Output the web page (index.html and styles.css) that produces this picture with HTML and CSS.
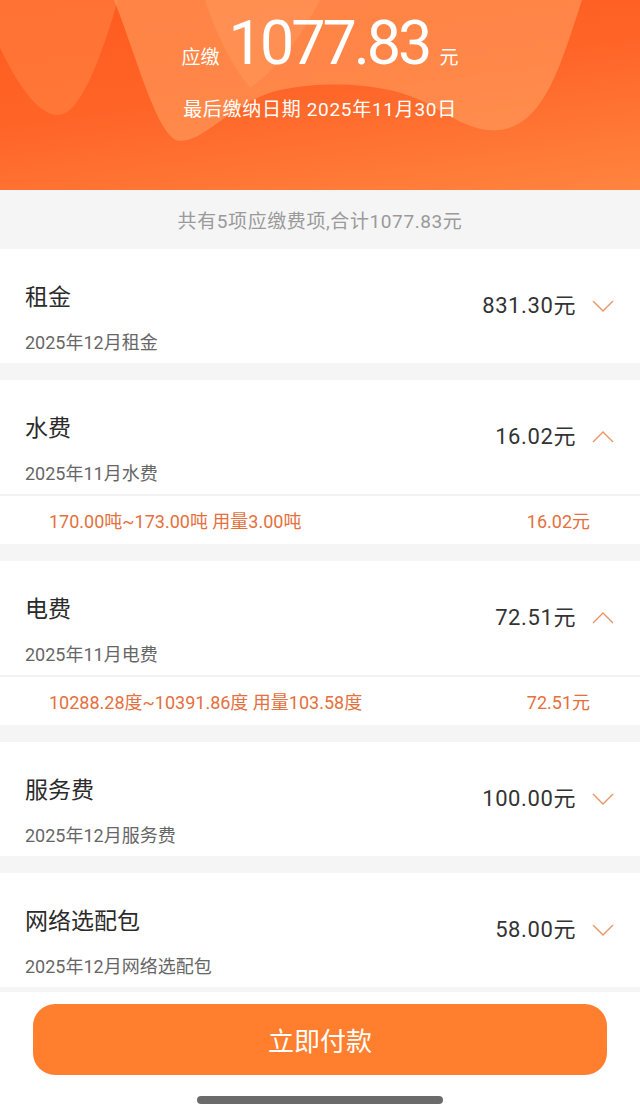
FILE: index.html
```html
<!DOCTYPE html>
<html lang="zh-CN">
<head>
<meta charset="utf-8">
<title>应缴费用</title>
<link rel="stylesheet" href="styles.css">
</head>
<body>
<div class="page">
  <header class="hero">
    <svg class="hero-bg" width="640" height="190" viewBox="0 0 640 190" aria-hidden="true">
      <path class="wave-a" d="M0,0 L0,48 C18,85 38,115 58,115 C80,115 100,60 118,0 Z"/>
      <path class="wave-b" d="M114,0 C138,60 158,140 180,141 C205,142 235,100 280,90 C330,80 385,84 420,100 C452,116 470,132 498,130 C545,127 562,60 582,0 Z"/>
      <path class="wave-c" d="M205,0 C215,30 228,60 250,88 C275,70 300,40 320,0 Z"/>
    </svg>
    <div class="hero-content">
      <div class="amount-row">
        <span class="amount-label">应缴</span>
        <span class="amount-big">1077.83</span>
        <span class="amount-unit">元</span>
      </div>
      <div class="due-date">最后缴纳日期 2025年11月30日</div>
    </div>
  </header>

  <div class="summary">共有5项应缴费项,合计1077.83元</div>

  <section class="item">
    <div class="item-main">
      <div class="item-left">
        <div class="item-title">租金</div>
        <div class="item-sub">2025年12月租金</div>
      </div>
      <div class="item-right">
        <span class="item-amount">831.30元</span>
        <svg class="chev" width="22" height="12" viewBox="0 0 22 12"><path d="M1,1 L11,11 L21,1"/></svg>
      </div>
    </div>
  </section>

  <section class="item">
    <div class="item-main">
      <div class="item-left">
        <div class="item-title">水费</div>
        <div class="item-sub">2025年11月水费</div>
      </div>
      <div class="item-right">
        <span class="item-amount">16.02元</span>
        <svg class="chev" width="22" height="12" viewBox="0 0 22 12"><path d="M1,11 L11,1 L21,11"/></svg>
      </div>
    </div>
    <div class="detail">
      <span>170.00吨~173.00吨 用量3.00吨</span>
      <span>16.02元</span>
    </div>
  </section>

  <section class="item">
    <div class="item-main">
      <div class="item-left">
        <div class="item-title">电费</div>
        <div class="item-sub">2025年11月电费</div>
      </div>
      <div class="item-right">
        <span class="item-amount">72.51元</span>
        <svg class="chev" width="22" height="12" viewBox="0 0 22 12"><path d="M1,11 L11,1 L21,11"/></svg>
      </div>
    </div>
    <div class="detail">
      <span>10288.28度~10391.86度 用量103.58度</span>
      <span>72.51元</span>
    </div>
  </section>

  <section class="item">
    <div class="item-main">
      <div class="item-left">
        <div class="item-title">服务费</div>
        <div class="item-sub">2025年12月服务费</div>
      </div>
      <div class="item-right">
        <span class="item-amount">100.00元</span>
        <svg class="chev" width="22" height="12" viewBox="0 0 22 12"><path d="M1,1 L11,11 L21,1"/></svg>
      </div>
    </div>
  </section>

  <section class="item">
    <div class="item-main">
      <div class="item-left">
        <div class="item-title">网络选配包</div>
        <div class="item-sub">2025年12月网络选配包</div>
      </div>
      <div class="item-right">
        <span class="item-amount">58.00元</span>
        <svg class="chev" width="22" height="12" viewBox="0 0 22 12"><path d="M1,1 L11,11 L21,1"/></svg>
      </div>
    </div>
  </section>

  <footer class="bottom-bar">
    <button class="pay-btn">立即付款</button>
    <div class="home-indicator"></div>
  </footer>
</div>
</body>
</html>
```

FILE: styles.css
```css
* { box-sizing: border-box; margin: 0; padding: 0; }
html, body { background: #f5f5f5; }
body {
  font-family: Roboto, "Noto Sans CJK SC", sans-serif;
  color: #333;
  width: 640px;
  height: 1116px;
  overflow: hidden;
}
.page {
  display: flex;
  flex-direction: column;
  height: 1116px;
}

/* Header */
.hero {
  position: relative;
  height: 190px;
  flex: none;
  background: linear-gradient(172deg, #ff5a1e 0%, #ff6427 45%, #ff843f 100%);
  overflow: hidden;
}
.hero-bg {
  position: absolute;
  left: 0;
  top: 0;
}
.wave-a { fill: #ff8a48; opacity: 0.5; }
.wave-b { fill: #ff9c5e; opacity: 0.62; }
.wave-c { fill: #ffa468; opacity: 0.35; }
.hero-content {
  position: relative;
  display: flex;
  flex-direction: column;
  align-items: center;
  padding-top: 12px;
  color: #fff;
}
.amount-row {
  display: flex;
  align-items: baseline;
  height: 62px;
}
.amount-label {
  font-size: 19px;
  margin-right: 9px;
}
.amount-big {
  font-size: 61px;
  line-height: 62px;
  letter-spacing: -3px;
}
.amount-unit {
  font-size: 19px;
  margin-left: 10px;
}
.due-date {
  margin-top: 22px;
  font-size: 19px;
  line-height: 28px;
  letter-spacing: 0.7px;
}

/* Summary */
.summary {
  flex: none;
  height: 59px;
  display: flex;
  align-items: center;
  justify-content: center;
  font-size: 19px;
  letter-spacing: 0.6px;
  color: #9a9a9a;
}

/* Items */
.item {
  flex: none;
  background: #fff;
  margin-bottom: 17px;
}
.item:last-of-type { margin-bottom: 5px; }
.item-main {
  height: 114px;
  display: flex;
  justify-content: space-between;
  padding: 0 26px 0 25px;
}
.item-left {
  display: flex;
  flex-direction: column;
  padding-top: 35px;
}
.item-title {
  font-size: 23px;
  line-height: 28px;
  color: #2b2b2b;
}
.item-sub {
  margin-top: 19px;
  font-size: 18px;
  line-height: 24px;
  color: #666;
}
.item-right {
  display: flex;
  align-items: center;
  height: 26px;
  margin-top: 44px;
}
.item-amount {
  font-size: 22px;
  line-height: 26px;
  letter-spacing: 0.6px;
  color: #333;
}
.chev {
  margin-left: 16px;
  fill: none;
  stroke: #ea9465;
  stroke-width: 1.4;
}
.detail {
  height: 50px;
  border-top: 2px solid #f3f3f3;
  display: flex;
  align-items: center;
  justify-content: space-between;
  padding: 0 50px 0 49px;
  font-size: 18px;
  color: #e4703e;
}

/* Bottom */
.bottom-bar {
  flex: 1;
  background: #fff;
  display: flex;
  flex-direction: column;
  align-items: center;
  padding-top: 12px;
}
.pay-btn {
  width: 574px;
  height: 71px;
  border: none;
  border-radius: 22px;
  background: #ff7f2e;
  color: #fff;
  font-family: Roboto, "Noto Sans CJK SC", sans-serif;
  font-size: 26px;
}
.home-indicator {
  margin-top: 21px;
  width: 246px;
  height: 8px;
  border-radius: 4px;
  background: #6b6b6b;
}
```
